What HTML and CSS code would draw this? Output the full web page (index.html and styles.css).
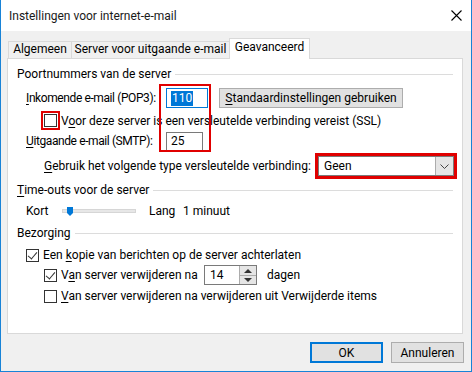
FILE: index.html
```html
<!DOCTYPE html>
<html lang="nl">
<head>
    <meta charset="UTF-8">
    <title>Instellingen voor internet-e-mail</title>
    <link rel="stylesheet" href="styles.css">
</head>
<body>
    <div class="window">
        <div class="titlebar">
            <span class="title">Instellingen voor internet-e-mail</span>
            <svg class="close" width="11" height="11" viewBox="0 0 11 11">
                <path d="M0.5 0.5 L10.5 10.5 M10.5 0.5 L0.5 10.5" stroke="#000" stroke-width="1.1" fill="none"/>
            </svg>
        </div>

        <div class="tabs">
            <div class="tab tab-1">Algemeen</div>
            <div class="tab tab-2">Server voor uitgaande e-mail</div>
            <div class="tab tab-3 active">Geavanceerd</div>
        </div>

        <div class="panel">
            <!-- Poortnummers -->
            <div class="group-head g1"><span>Poortnummers van de server</span><div class="rule"></div></div>

            <div class="row r-pop">
                <span class="label"><u>I</u>nkomende e-mail (POP3):</span>
                <div class="input port focus"><span class="sel">110</span></div>
                <button class="btn std"><u>S</u>tandaardinstellingen gebruiken</button>
            </div>

            <div class="row r-ssl lvl2">
                <span class="check marked"></span>
                <span>V<u>o</u>or deze server is een versleutelde verbinding vereist (SSL)</span>
            </div>

            <div class="row r-smtp">
                <span class="label"><u>U</u>itgaande e-mail (SMTP):</span>
                <div class="input port smtp">25</div>
            </div>

            <div class="row r-enc lvl2">
                <span><u>G</u>ebruik het volgende type versleutelde verbinding:</span>
                <div class="select">
                    <span>Geen</span>
                    <span class="drop">
                        <svg width="9" height="5" viewBox="0 0 9 5"><path d="M0.5 0.5 L4.5 4.5 L8.5 0.5" stroke="#444" fill="none"/></svg>
                    </span>
                </div>
            </div>

            <div class="mark-ports"></div>

            <!-- Time-outs -->
            <div class="group-head g2"><span><u>T</u>ime-outs voor de server</span><div class="rule"></div></div>

            <div class="row r-time">
                <span class="kort">Kort</span>
                <div class="slider"><div class="track"></div><div class="thumb"></div></div>
                <span class="lang">Lang</span>
                <span>1 minuut</span>
            </div>

            <!-- Bezorging -->
            <div class="group-head g3"><span>Bezorging</span><div class="rule"></div></div>

            <div class="row r-copy">
                <span class="check checked"></span>
                <span>Een <u>k</u>opie van berichten op de server achterlaten</span>
            </div>

            <div class="row r-del lvl2">
                <span class="check checked"></span>
                <span class="del-label">V<u>a</u>n server verwijderen na</span>
                <div class="spin">
                    <span class="spin-val">14</span>
                    <span class="spin-btns">
                        <span class="arrow up"></span>
                        <span class="arrow down"></span>
                    </span>
                </div>
                <span class="dagen">dagen</span>
            </div>

            <div class="row r-del2 lvl2">
                <span class="check"></span>
                <span><u>V</u>an server verwijderen na verwijderen uit Verwijderde items</span>
            </div>
        </div>

        <div class="footer">
            <button class="btn dlg default">OK</button>
            <button class="btn dlg">Annuleren</button>
        </div>
    </div>
</body>
</html>
```

FILE: styles.css
```css
body {
    margin: 0;
    font-family: Roboto, "Noto Sans", sans-serif;
    font-size: 12px;
    color: #000;
    white-space: nowrap;
}
u {
    text-decoration: underline;
    text-underline-offset: 2px;
}
.window {
    width: 472px;
    height: 372px;
    box-sizing: border-box;
    border: 1px solid #1883d7;
    border-top: none;
    background: #f0f0f0;
    position: relative;
}
.titlebar {
    height: 31px;
    background: #fff;
    display: flex;
    align-items: center;
    padding: 0 9px 0 8px;
}
.title {
    flex: 1;
    color: #1a1a1a;
}

/* tabs */
.tabs {
    display: flex;
    align-items: flex-end;
    height: 27px;
    padding-left: 7px;
    position: relative;
    z-index: 1;
}
.tab {
    box-sizing: border-box;
    height: 17px;
    line-height: 15px;
    border: 1px solid #d9d9d9;
    border-bottom: none;
    border-right: none;
    background: #f0f0f0;
    text-align: center;
}
.tab-1 { width: 63px; }
.tab-2 { width: 158px; }
.tab-3 { width: 81px; }
.tab.active {
    height: 21px;
    margin-bottom: -1px;
    line-height: 17px;
    background: #fff;
    border-right: 1px solid #d9d9d9;
}

.panel {
    box-sizing: border-box;
    margin: 0 8px 0 6px;
    height: 276px;
    border: 1px solid #d9d9d9;
    background: #fff;
    padding: 0 9px;
    position: relative;
}

.group-head {
    display: flex;
    align-items: center;
    height: 16px;
}
.group-head .rule {
    flex: 1;
    border-top: 1px solid #dcdcdc;
    margin-left: 4px;
}
.g1 { margin-top: 7px; }
.g2 { margin-top: 4px; }
.g3 { margin-top: 4px; }

.row {
    display: flex;
    align-items: center;
    padding-left: 9px;
}
.row.lvl2 { padding-left: 27px; }

.r-pop { height: 22px; margin-top: 5px; }
.r-ssl { height: 21px; margin-top: 1px; }
.r-smtp { height: 20px; }
.r-enc { height: 24px; margin-top: 3px; }
.r-time { height: 20px; margin-top: 3px; }
.r-copy { height: 20px; margin-top: 4px; }
.r-del { height: 20px; }
.r-del2 { height: 20px; margin-top: 1px; }

.label {
    width: 140px;
    flex: none;
    letter-spacing: -0.4px;
}
.input {
    box-sizing: border-box;
    height: 20px;
    border: 1px solid #7a7a7a;
    background: #fff;
    display: flex;
    align-items: center;
    padding-left: 4px;
    flex: none;
}
.port { width: 42px; }
.port.smtp { width: 37px; height: 19px; }
.input.focus { border-color: #0078d7; }
.sel {
    background: #0078d7;
    color: #fff;
    padding: 0 1px;
    line-height: 15px;
}

.btn {
    box-sizing: border-box;
    font-family: inherit;
    font-size: 12px;
    color: #000;
    background: #e1e1e1;
    border: 1px solid #adadad;
    padding: 0;
    height: 20px;
    white-space: nowrap;
}
.std {
    width: 184px;
    margin-left: 11px;
}

.check {
    box-sizing: border-box;
    width: 13px;
    height: 13px;
    border: 1px solid #333;
    background: #fff;
    margin-right: 4px;
    position: relative;
    flex: none;
}
.check.marked {
    outline: 2px solid #e00000;
    outline-offset: 1px;
}
.check.checked::after {
    content: "";
    position: absolute;
    left: 3px;
    top: 0;
    width: 4px;
    height: 8px;
    border: solid #333;
    border-width: 0 1.3px 1.3px 0;
    transform: rotate(40deg);
}

.select {
    box-sizing: border-box;
    margin-left: auto;
    margin-right: -1px;
    width: 136px;
    height: 20px;
    border: 1px solid #7a7a7a;
    outline: 3px solid #e00000;
    display: flex;
    align-items: center;
    padding-left: 5px;
    justify-content: space-between;
}
.drop {
    width: 17px;
    height: 18px;
    background: #e5e5e5;
    border-left: 1px solid #acacac;
    display: flex;
    align-items: center;
    justify-content: center;
}

/* red annotation round the port fields */
.mark-ports {
    position: absolute;
    left: 151px;
    top: 25px;
    width: 48px;
    height: 64px;
    border: 2px solid #e00000;
}

.kort { width: 36px; }
.slider {
    position: relative;
    width: 74px;
    height: 20px;
}
.track {
    position: absolute;
    left: 0;
    right: 0;
    top: 8px;
    height: 4px;
    background: #e7e7e7;
    border: 1px solid #d6d6d6;
    box-sizing: border-box;
}
.thumb {
    position: absolute;
    left: 5px;
    top: 6px;
    width: 6px;
    height: 6px;
    background: #0078d7;
}
.thumb::after {
    content: "";
    position: absolute;
    top: 6px;
    left: 0;
    border-left: 3px solid transparent;
    border-right: 3px solid transparent;
    border-top: 3px solid #0078d7;
}
.lang {
    margin-left: 13px;
    width: 34px;
}

.del-label { width: 143px; flex: none; }
.spin {
    box-sizing: border-box;
    width: 53px;
    height: 20px;
    border: 1px solid #7a7a7a;
    display: flex;
    align-items: center;
    justify-content: space-between;
    padding-left: 5px;
    flex: none;
}
.spin-btns {
    width: 16px;
    height: 18px;
    display: flex;
    flex-direction: column;
    border-left: 1px solid #acacac;
}
.arrow {
    flex: 1;
    background: #e5e5e5;
    position: relative;
}
.arrow.up { border-bottom: 1px solid #acacac; }
.arrow::after {
    content: "";
    position: absolute;
    left: 4px;
    top: 3px;
    border-left: 4px solid transparent;
    border-right: 4px solid transparent;
}
.arrow.up::after { border-bottom: 4px solid #333; }
.arrow.down::after { border-top: 4px solid #333; top: 2px; }
.dagen { margin-left: 10px; }

.footer {
    display: flex;
    justify-content: flex-end;
    gap: 8px;
    padding: 8px 7px 0 0;
}
.dlg {
    width: 73px;
    height: 21px;
}
.dlg.default {
    border: 2px solid #0078d7;
}
```
